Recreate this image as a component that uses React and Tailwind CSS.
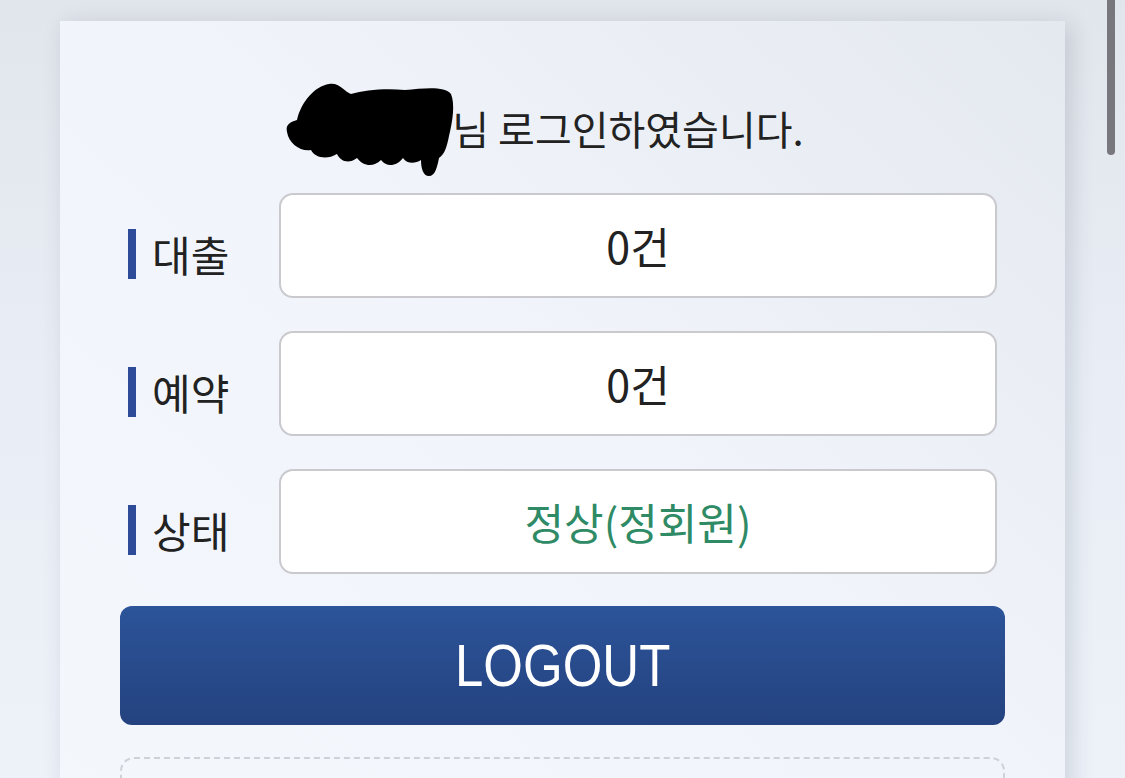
import React from 'react';

const rows = [
    { label: '대출', value: '0건', tone: 'text-[#222222]' },
    { label: '예약', value: '0건', tone: 'text-[#222222]' },
    { label: '상태', value: '정상(정회원)', tone: 'text-[#2f8a66]' },
];

function Redaction() {
    // scribble that hides the member name
    return (
        <span className="relative inline-block w-[131px] h-[40px] align-middle">
            <svg
                className="absolute left-[-36px] top-[-28px]"
                width="172"
                height="98"
                viewBox="0 0 172 98"
            >
                <path
                    d="M12 40 C16 22 30 6 44 4 C54 2 60 12 66 14 C80 10 100 8 120 10 C140 8 160 6 166 14 C170 24 168 40 164 56 C162 66 160 74 154 78 C152 88 150 96 144 96 C138 96 136 88 136 80 C130 84 122 84 118 78 C112 86 102 88 96 80 C88 88 78 86 72 78 C64 84 56 82 52 74 C42 80 30 78 26 70 C16 72 4 64 2 52 C0 44 6 42 12 40 Z"
                    fill="#000"
                />
            </svg>
        </span>
    );
}

function StatRow({ label, value, tone }) {
    return (
        <div className="flex items-center px-2 h-[105px]">
            <div className="w-[151px] flex items-center pt-4 shrink-0">
                <span className="w-[8px] h-[50px] bg-[#2d4b99] mr-[16px]" />
                <span className="text-[42px] leading-none text-[#222222]">{label}</span>
            </div>
            <div className="flex-1 h-full rounded-[14px] border-[2.5px] border-[#c9c9ce] bg-white flex items-center justify-center">
                <span className={`text-[43px] leading-none ${tone}`}>{value}</span>
            </div>
        </div>
    );
}

export default function App() {
    return (
        <div
            className="relative h-[778px] overflow-hidden bg-gradient-to-b from-[#e1e5ec] via-[#e9eef6] to-[#edf2f9] px-[60px] pt-[21px]"
            style={{ fontFamily: '"Noto Sans CJK KR", "Noto Sans", sans-serif' }}
        >
            <div className="bg-gradient-to-bl from-[#e4e8ef] via-[#f1f5fb] via-45% to-[#f4f8fd] shadow-[6px_4px_22px_rgba(40,50,70,0.16)] px-[60px] pt-[83px] h-[900px]">
                <div className="flex items-center justify-center h-[48px] text-[40px] text-[#222222]">
                    <Redaction />
                    <span className="leading-none">님 로그인하였습니다.</span>
                </div>

                <div className="mt-[41px] flex flex-col gap-[33px]">
                    {rows.map(row => (
                        <StatRow key={row.label} {...row} />
                    ))}
                </div>

                <button className="mt-[32px] w-full h-[119px] rounded-[12px] bg-gradient-to-b from-[#2c5499] to-[#24427f] flex items-center justify-center">
                    <span
                        className="inline-block text-white text-[60px] leading-none scale-x-[0.85]"
                        style={{ fontFamily: '"Liberation Sans", Arial, sans-serif' }}
                    >
                        LOGOUT
                    </span>
                </button>

                <div className="mt-[32px] h-[200px] rounded-[14px] border-2 border-dashed border-[#cdd1d8]" />
            </div>

            {/* scroll indicator */}
            <div className="absolute right-[10px] top-0 w-[8px] h-[155px] rounded-b-full bg-[#77777d]" />
        </div>
    );
}
